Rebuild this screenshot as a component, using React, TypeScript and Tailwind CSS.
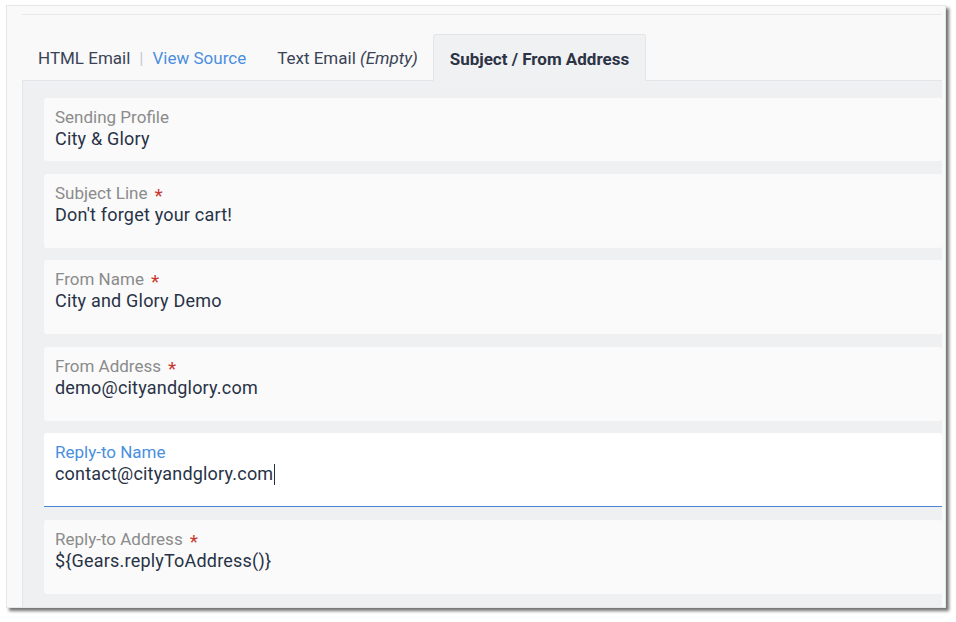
import React from "react";

type Field = {
  label: string;
  value: string;
  required?: boolean;
  focused?: boolean;
  tall?: boolean;
};

const fields: Field[] = [
  { label: "Sending Profile", value: "City & Glory" },
  { label: "Subject Line", value: "Don't forget your cart!", required: true, tall: true },
  { label: "From Name", value: "City and Glory Demo", required: true, tall: true },
  { label: "From Address", value: "demo@cityandglory.com", required: true, tall: true },
  { label: "Reply-to Name", value: "contact@cityandglory.com", focused: true, tall: true },
  { label: "Reply-to Address", value: "${Gears.replyToAddress()}", required: true, tall: true },
];

function FieldCard({ field }: { field: Field }) {
  const box = field.focused
    ? "bg-white border-b border-[#4a86d8] rounded-t-[3px]"
    : "bg-[#fafafa] rounded-[3px]";
  return (
    <div className={`${box} ${field.tall ? "h-[74px]" : "h-[63px]"} shrink-0 pl-[11px] pt-[9px]`}>
      <div
        className={`flex h-[20px] items-start gap-[7px] text-[17px] leading-[20px] ${
          field.focused ? "text-[#4a8fdf]" : "text-[#8b8b8b]"
        }`}
      >
        <span>{field.label}</span>
        {field.required && (
          <span className="mt-[5px] h-[15px] text-[19px] leading-[15px] text-[#c9372c]">*</span>
        )}
      </div>
      <div className="mt-[1px] flex h-[22px] items-center text-[18px] leading-[22px] tracking-[0.2px] text-[#283246]">
        <span>{field.value}</span>
        {field.focused && <span className="ml-[1px] inline-block h-[21px] w-px bg-[#283246]" />}
      </div>
    </div>
  );
}

export default function App() {
  return (
    <div className="h-[622px] w-[956px] bg-white pl-[6px] pt-[5px] font-['Roboto',sans-serif]">
      <div className="flex h-[603px] w-[940px] flex-col border border-[#e4e6e8] bg-[#f9f9f9] pl-[15px] pr-[3px] shadow-[3px_3px_3px_rgba(0,0,0,0.55)]">
        <div className="mt-[8px] h-px bg-[#e6e8ea]" />

        <div className="mt-[19px] flex h-[47px] items-stretch border-b border-[#e3e5e8]">
          <div className="flex items-center gap-[9px] px-[16px] pt-[3px] text-[17px] text-[#3a4356]">
            <span>HTML Email</span>
            <span className="text-[#c6cbd2]">|</span>
            <span className="text-[#4a8fdf]">View Source</span>
          </div>
          <div className="flex items-center px-[15px] pt-[3px] text-[17px] text-[#3a4356]">
            <span>
              Text Email <em className="italic">(Empty)</em>
            </span>
          </div>
          <div className="-mb-px flex items-center rounded-t-[3px] border border-b-0 border-[#e3e5e8] bg-[#f0f1f3] px-[16px] pt-[3px] text-[17px] font-bold text-[#2c3345]">
            Subject / From Address
          </div>
        </div>

        <div className="flex flex-1 flex-col gap-[12.5px] border-l border-[#e3e5e8] bg-[#eff0f2] pl-[21px] pt-[17px]">
          {fields.map((f) => (
            <FieldCard key={f.label} field={f} />
          ))}
        </div>
      </div>
    </div>
  );
}
